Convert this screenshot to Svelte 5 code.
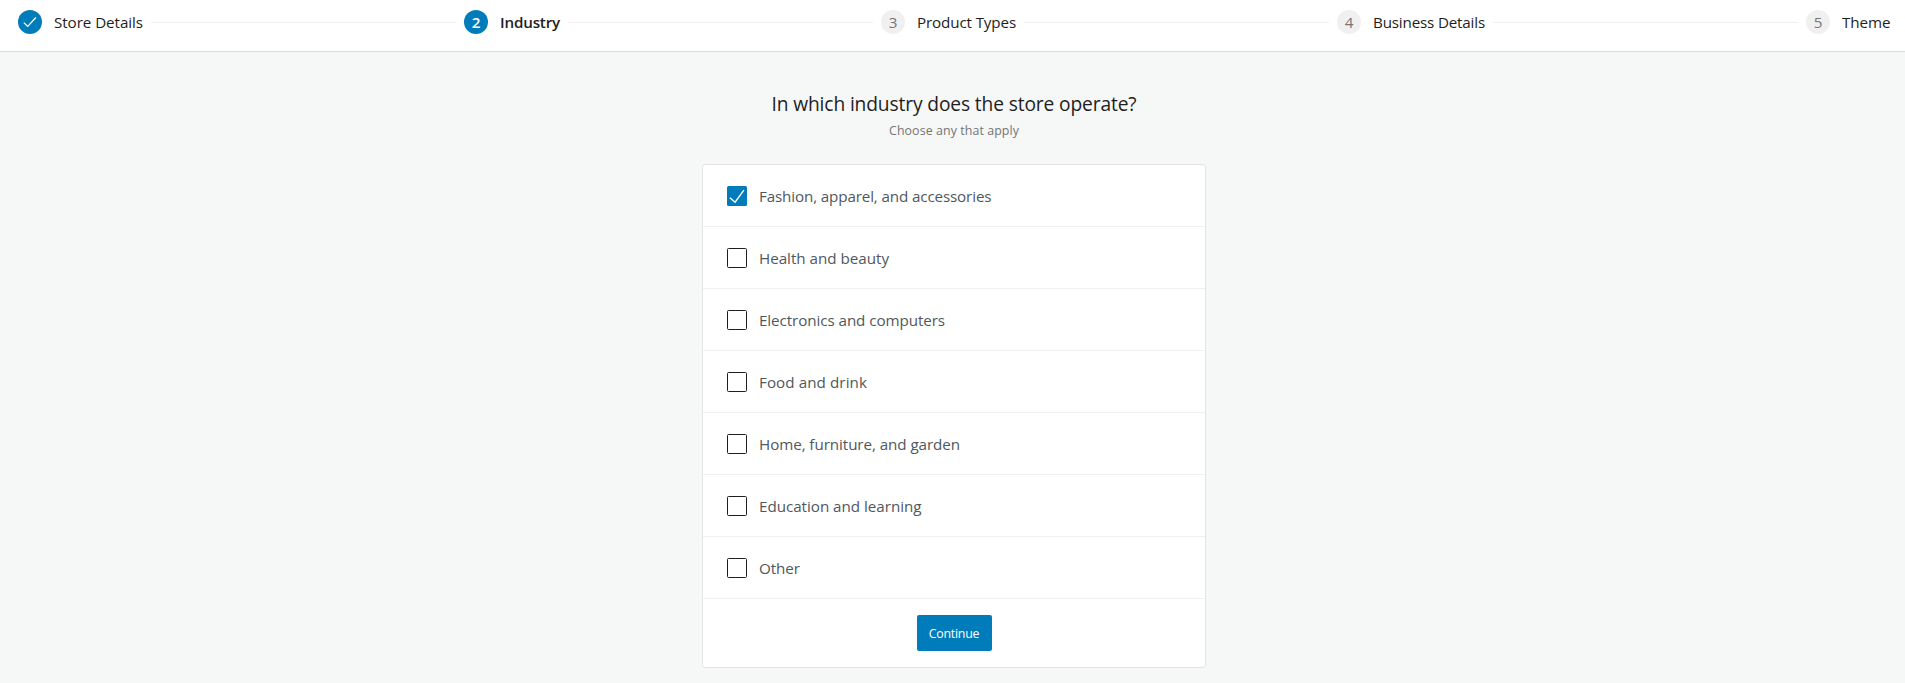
<script>
  const steps = [
    { label: 'Store Details', width: 89, state: 'done' },
    { label: 'Industry', width: 60, state: 'active' },
    { label: 'Product Types', width: 99, state: '' },
    { label: 'Business Details', width: 112, state: '' },
    { label: 'Theme', width: 48.5, state: '' }
  ];

  let industries = $state([
    { label: 'Fashion, apparel, and accessories', width: 232.4, checked: true },
    { label: 'Health and beauty', width: 130, checked: false },
    { label: 'Electronics and computers', width: 186, checked: false },
    { label: 'Food and drink', width: 108, checked: false },
    { label: 'Home, furniture, and garden', width: 201, checked: false },
    { label: 'Education and learning', width: 162.5, checked: false },
    { label: 'Other', width: 41, checked: false }
  ]);

  // Tracks the text out or in so that it fills the given width.
  function fit(node, width) {
    const natural = node.getBoundingClientRect().width;
    node.style.letterSpacing = (width - natural) / node.textContent.length + 'px';
  }
</script>

<div class="page">
  <header class="stepper">
    {#each steps as step, i}
      {#if i > 0}<div class="divider"></div>{/if}
      <div class="step {step.state}">
        <span class="bullet">
          {#if step.state === 'done'}
            <svg width="24" height="24" viewBox="0 0 24 24" fill="none" stroke="#fff" stroke-width="1.25"><path d="M5.8 12.6 9.7 16.4 17.9 7.5" /></svg>
          {:else}{i + 1}{/if}
        </span>
        <span class="label"><span use:fit={step.width}>{step.label}</span></span>
      </div>
    {/each}
  </header>

  <main>
    <h1><span use:fit={365}>In which industry does the store operate?</span></h1>
    <p><span use:fit={130}>Choose any that apply</span></p>
    <section class="card">
      {#each industries as item}
        <button class="row" role="checkbox" aria-checked={item.checked} onclick={() => (item.checked = !item.checked)}>
          <span class="box" class:checked={item.checked}>
            {#if item.checked}
              <svg width="20" height="20" viewBox="0 0 20 20" fill="none" stroke="#fff" stroke-width="1.4"><path d="M2.9 11.7 8.1 16.2 16.9 4.2" /></svg>
            {/if}
          </span>
          <span class="name"><span use:fit={item.width}>{item.label}</span></span>
        </button>
      {/each}
      <div class="actions">
        <button class="continue"><span use:fit={50.5}>Continue</span></button>
      </div>
    </section>
  </main>
</div>

<style>
  :global(body) { background: #f6f7f7; overflow: hidden; }
  .page {
    height: 683px;
    background: #f6f7f7;
    font-family: "Open Sans", "Noto Sans", sans-serif;
    color: #1e1e1e;
  }
  .page span { white-space: nowrap; }
  .stepper {
    display: flex;
    height: 41px;
    padding: 10px 14.5px 0 18px;
    background: #fff;
    border-bottom: 1px solid #dcdcde;
  }
  .step { display: flex; height: 24px; gap: 12px; flex: none; }
  .bullet {
    display: flex;
    align-items: center;
    justify-content: center;
    width: 24px;
    height: 24px;
    border-radius: 50%;
    background: #f0f0f0;
    color: #757575;
    font-size: 15.2px;
    line-height: 24px;
  }
  .done .bullet, .active .bullet { background: #007cba; color: #fff; }
  .active .bullet, .active .label { font-weight: 600; }
  .label { font-size: 15.2px; line-height: 24px; }
  .divider { flex: 1; height: 1px; margin: 12px 8px 0; background: #f0f0f0; }

  main { display: flex; flex-direction: column; align-items: center; padding-top: 38px; padding-left: 3px; }
  h1 { margin: 0; font-size: 19.2px; font-weight: 400; line-height: 28px; }
  p { margin: 5px 0 0; font-size: 12.4px; line-height: 16px; color: #757575; }
  .card {
    width: 502px;
    margin-top: 25px;
    background: #fff;
    border: 1px solid #e2e4e7;
    border-radius: 3px;
  }
  .row {
    display: flex;
    align-items: center;
    gap: 12px;
    width: 100%;
    height: 62px;
    padding: 1px 24px 0;
    border: 0;
    border-bottom: 1px solid #f0f0f0;
    background: none;
    font-family: inherit;
    font-size: 15.2px;
    line-height: 24px;
    color: #50575e;
    text-align: left;
  }
  .box {
    width: 20px;
    height: 20px;
    box-sizing: border-box;
    border: 1px solid #1e1e1e;
    border-radius: 1.5px;
    background: #fff;
  }
  .box.checked { border: 0; background: #007cba; }
  svg { display: block; }
  .actions { display: flex; justify-content: center; padding: 16px 0; }
  .continue {
    width: 75px;
    height: 36px;
    padding: 1px 0 0;
    border: 0;
    border-radius: 2px;
    background: #007cba;
    color: #fff;
    font-family: inherit;
    font-size: 12.4px;
    line-height: 18px;
  }
</style>
